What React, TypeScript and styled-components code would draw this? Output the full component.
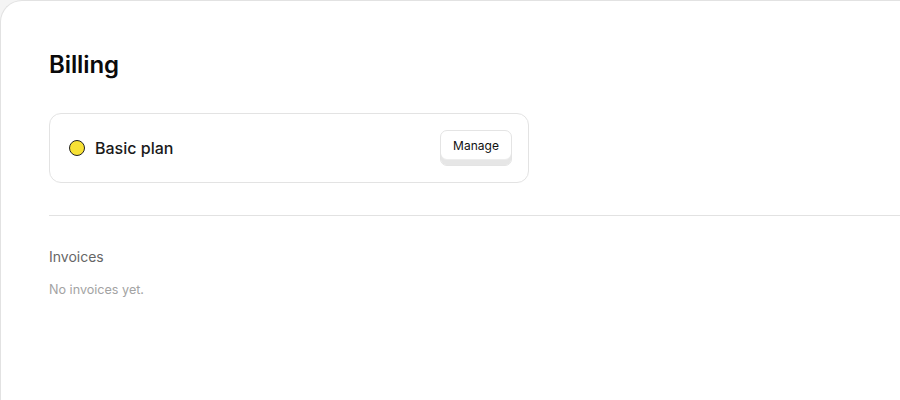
import React from "react";
import styled, { createGlobalStyle } from "styled-components";

const Global = createGlobalStyle`
  html, body { margin: 0; padding: 0; background: #f4f4f4; }
  body { font-family: Inter, "Noto Sans", sans-serif; color: #111; }
`;

const Panel = styled.main`
  box-sizing: border-box;
  min-height: 400px;
  background: #fff;
  border-top: 1px solid #e2e2e2;
  border-left: 1px solid #e2e2e2;
  border-top-left-radius: 22px;
  padding: 48px 0 0 48px;
`;

const Title = styled.h1`
  margin: 0;
  font-size: 24px;
  line-height: 32px;
  font-weight: 600;
  letter-spacing: -0.1px;
  color: #0a0a0a;
`;

const PlanCard = styled.section`
  box-sizing: border-box;
  margin-top: 32px;
  width: 480px;
  height: 70px;
  border: 1px solid #e3e3e3;
  border-radius: 12px;
  display: flex;
  align-items: center;
  padding: 0 16px 0 19px;
`;

const Dot = styled.span<{ $color: string }>`
  box-sizing: border-box;
  width: 16px;
  height: 16px;
  border-radius: 50%;
  background: ${(p) => p.$color};
  border: 1.5px solid #222;
  flex: none;
`;

const PlanName = styled.span`
  margin-left: 10px;
  font-size: 16px;
  font-weight: 500;
  color: #1a1a1a;
  flex: 1;
`;

const Button = styled.button`
  box-sizing: border-box;
  width: 72px;
  height: 36px;
  padding: 0 0 4px;
  font-family: Inter, "Noto Sans", sans-serif;
  font-size: 12px;
  font-weight: 400;
  color: #111;
  background: #fff;
  border: 1px solid #e4e4e4;
  border-radius: 7px;
  box-shadow: inset 0 -5px 0 #e6e6e6, inset 0 -6px 0 #ededed;
  margin-bottom: 1px;
`;

const Divider = styled.hr`
  margin: 32px 0 0;
  border: none;
  border-top: 1px solid #e2e2e2;
`;

const SectionTitle = styled.h2`
  margin: 31px 0 0;
  font-size: 14px;
  line-height: 20px;
  font-weight: 400;
  color: #666;
`;

const Empty = styled.p`
  margin: 15px 0 0;
  font-size: 12.6px;
  line-height: 16px;
  color: #a3a3a3;
`;

export default function App() {
  return (
    <>
      <Global />
      <Panel>
        <Title>Billing</Title>
        <PlanCard>
          <Dot $color="#f7e135" />
          <PlanName>Basic plan</PlanName>
          <Button>Manage</Button>
        </PlanCard>
        <Divider />
        <SectionTitle>Invoices</SectionTitle>
        <Empty>No invoices yet.</Empty>
      </Panel>
    </>
  );
}
